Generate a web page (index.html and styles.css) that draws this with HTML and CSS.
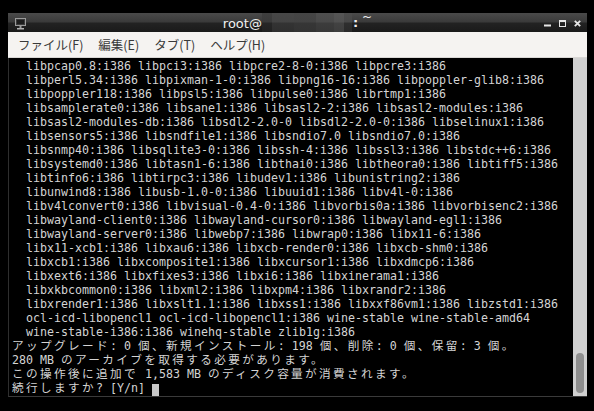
FILE: index.html
```html
<!DOCTYPE html>
<html lang="ja">
<head>
<meta charset="utf-8">
<title>root@: ~</title>
<link rel="stylesheet" href="styles.css">
</head>
<body>
<div class="screen">
  <div class="window">
    <div class="titlebar">
      <div class="tb-left">
        <svg class="app-icon" width="11" height="12" viewBox="0 0 11 12">
          <rect x="0.5" y="0.5" width="10" height="7" fill="#3a3a3a" stroke="#9a9a9a"/>
          <rect x="2" y="2" width="7" height="4" fill="#1c1c1c"/>
          <rect x="4.5" y="8" width="2" height="2" fill="#9a9a9a"/>
          <rect x="2" y="10" width="7" height="1.5" fill="#b0b0b0"/>
        </svg>
      </div>
      <div class="title">
        <span class="title-user">root@</span><span class="mosaic"><i class="m1"></i><i class="m2"></i><i class="m3"></i><i class="m4"></i><i class="m5"></i><i class="m6"></i></span><span class="title-colon">:</span><span class="title-tilde">~</span>
      </div>
      <div class="controls">
        <svg width="7" height="7" viewBox="0 0 7 7"><rect x="0" y="4.5" width="7" height="2" fill="#e6e6e6"/></svg>
        <svg width="7" height="7" viewBox="0 0 7 7"><rect x="0.5" y="0.5" width="6" height="6" fill="none" stroke="#e6e6e6"/><rect x="0" y="0" width="7" height="2" fill="#e6e6e6"/></svg>
        <svg width="7" height="7" viewBox="0 0 7 7"><path d="M0.8 0.8 L6.2 6.2 M6.2 0.8 L0.8 6.2" stroke="#e6e6e6" stroke-width="1.8"/></svg>
      </div>
    </div>
    <div class="menubar">
      <span class="menu-item">ファイル(F)</span>
      <span class="menu-item">編集(E)</span>
      <span class="menu-item">タブ(T)</span>
      <span class="menu-item">ヘルプ(H)</span>
    </div>
    <div class="term">
      <div class="output">
        <div class="line">  libpcap0.8:i386 libpci3:i386 libpcre2-8-0:i386 libpcre3:i386</div>
        <div class="line">  libperl5.34:i386 libpixman-1-0:i386 libpng16-16:i386 libpoppler-glib8:i386</div>
        <div class="line">  libpoppler118:i386 libpsl5:i386 libpulse0:i386 librtmp1:i386</div>
        <div class="line">  libsamplerate0:i386 libsane1:i386 libsasl2-2:i386 libsasl2-modules:i386</div>
        <div class="line">  libsasl2-modules-db:i386 libsdl2-2.0-0 libsdl2-2.0-0:i386 libselinux1:i386</div>
        <div class="line">  libsensors5:i386 libsndfile1:i386 libsndio7.0 libsndio7.0:i386</div>
        <div class="line">  libsnmp40:i386 libsqlite3-0:i386 libssh-4:i386 libssl3:i386 libstdc++6:i386</div>
        <div class="line">  libsystemd0:i386 libtasn1-6:i386 libthai0:i386 libtheora0:i386 libtiff5:i386</div>
        <div class="line">  libtinfo6:i386 libtirpc3:i386 libudev1:i386 libunistring2:i386</div>
        <div class="line">  libunwind8:i386 libusb-1.0-0:i386 libuuid1:i386 libv4l-0:i386</div>
        <div class="line">  libv4lconvert0:i386 libvisual-0.4-0:i386 libvorbis0a:i386 libvorbisenc2:i386</div>
        <div class="line">  libwayland-client0:i386 libwayland-cursor0:i386 libwayland-egl1:i386</div>
        <div class="line">  libwayland-server0:i386 libwebp7:i386 libwrap0:i386 libx11-6:i386</div>
        <div class="line">  libx11-xcb1:i386 libxau6:i386 libxcb-render0:i386 libxcb-shm0:i386</div>
        <div class="line">  libxcb1:i386 libxcomposite1:i386 libxcursor1:i386 libxdmcp6:i386</div>
        <div class="line">  libxext6:i386 libxfixes3:i386 libxi6:i386 libxinerama1:i386</div>
        <div class="line">  libxkbcommon0:i386 libxml2:i386 libxpm4:i386 libxrandr2:i386</div>
        <div class="line">  libxrender1:i386 libxslt1.1:i386 libxss1:i386 libxxf86vm1:i386 libzstd1:i386</div>
        <div class="line">  ocl-icd-libopencl1 ocl-icd-libopencl1:i386 wine-stable wine-stable-amd64</div>
        <div class="line">  wine-stable-i386:i386 winehq-stable zlib1g:i386</div>
        <div class="line"><span class="w">アップグレード</span>: 0 <span class="w">個、新規インストール</span>: 198 <span class="w">個、削除</span>: 0 <span class="w">個、保留</span>: 3 <span class="w">個。</span></div>
        <div class="line">280 MB <span class="w">のアーカイブを取得する必要があります。</span></div>
        <div class="line"><span class="w">この操作後に追加で</span> 1,583 MB <span class="w">のディスク容量が消費されます。</span></div>
        <div class="line"><span class="w">続行しますか</span>? [Y/n] <span class="cursor"> </span></div>
      </div>
      <div class="scrollbar"><div class="thumb"></div></div>
    </div>
  </div>
</div>
</body>
</html>
```
FILE: styles.css
```css
html, body {
  margin: 0;
  padding: 0;
  background: #000;
}
body {
  width: 594px;
  height: 411px;
  overflow: hidden;
}
.screen {
  padding: 13px 0 0 8px;
}
.window {
  width: 579px;
}
.titlebar {
  height: 19px;
  display: grid;
  grid-template-columns: 1fr auto 1fr;
  background: linear-gradient(#4a4a4a 0%, #3b3b3b 45%, #222 55%, #1a1a1a 100%);
}
.tb-left {
  display: flex;
  align-items: center;
  padding-left: 7px;
}
.app-icon {
  display: block;
  margin-top: 2px;
}
.title {
  display: flex;
  align-items: stretch;
  font-family: "DejaVu Sans", "Liberation Sans", sans-serif;
  font-size: 13px;
  color: #f0f0f0;
}
.title-user {
  align-self: center;
  margin-top: 1px;
}
.mosaic {
  display: flex;
}
.mosaic i {
  display: block;
}
.mosaic .m1 { width: 10px; background: linear-gradient(#3e3e3e, #3a3a3a 45%, #262626 55%, #222); }
.mosaic .m2 { width: 22px; background: linear-gradient(#474747, #444 45%, #333 55%, #2f2f2f); }
.mosaic .m3 { width: 22px; background: linear-gradient(#454545, #434343 45%, #363636 55%, #333); }
.mosaic .m4 { width: 18px; background: linear-gradient(#4e4e4e, #4a4a4a 45%, #3c3c3c 55%, #383838); }
.mosaic .m5 { width: 10px; background: linear-gradient(#555, #515151 45%, #424242 55%, #3e3e3e); }
.mosaic .m6 { width: 8px; background: linear-gradient(#4c4c4c, #484848 45%, #2e2e2e 55%, #2a2a2a); }
.title-colon {
  align-self: center;
  margin-left: 1px;
  font-weight: bold;
}
.title-tilde {
  align-self: flex-start;
  margin-left: 4px;
  margin-top: -3px;
  font-size: 12px;
}
.controls {
  display: flex;
  justify-content: flex-end;
  align-items: center;
  gap: 8px;
  padding: 2px 6px 0 0;
}
.controls svg {
  display: block;
}
.menubar {
  height: 25px;
  display: flex;
  align-items: center;
  padding-left: 3px;
  background: #f5f3f1;
  border-bottom: 1px solid #d9d7d5;
  font-family: "Noto Sans CJK JP", "DejaVu Sans", sans-serif;
  font-size: 12.5px;
  color: #3a3a3a;
}
.menu-item {
  padding: 0 7px;
  margin-right: 1px;
}
.term {
  height: 338px;
  display: flex;
  border-left: 1px solid #2e2e2e;
  border-bottom: 1px solid #3a3a3a;
}
.output {
  flex: 1;
  background: #000;
  padding: 1px 0 0 3px;
  font-family: "DejaVu Sans Mono", "Noto Sans CJK JP", monospace;
  font-size: 11.63px;
  color: #d4d4d4;
  overflow: hidden;
}
.line {
  height: 14px;
  line-height: 14px;
  white-space: pre;
}
.w {
  letter-spacing: 2.37px;
}
.cursor {
  display: inline-block;
  width: 7px;
  height: 13px;
  vertical-align: -3px;
  background: #c8c8c8;
}
.scrollbar {
  width: 14px;
  display: flex;
  flex-direction: column;
  justify-content: flex-end;
  padding: 0 3px 3px;
  box-sizing: border-box;
  background: #d0d0d0;
}
.thumb {
  height: 40px;
  border-radius: 4px;
  background: #8e8e8e;
}
```
